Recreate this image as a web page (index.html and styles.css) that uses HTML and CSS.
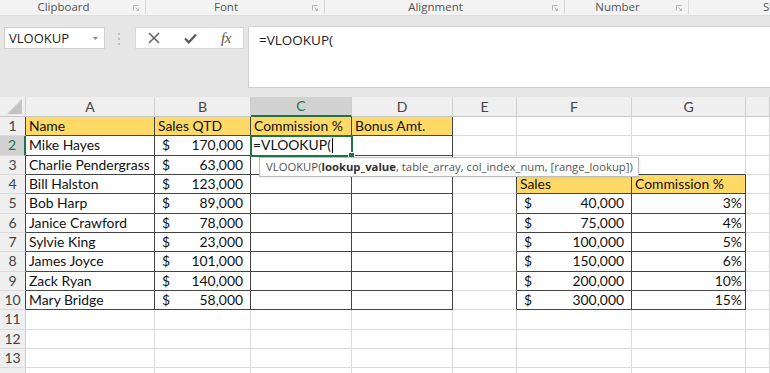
FILE: index.html
```html
<!DOCTYPE html>
<html>
<head>
<meta charset="utf-8">
<link rel="stylesheet" href="styles.css">
</head>
<body>
<div class="ribbon">
  <div class="group g-clip"><span class="glabel">Clipboard</span><svg class="launch" width="6" height="6" viewBox="0 0 6 6"><path d="M0.5 5.5V0.5H5.5" fill="none" stroke="#b5b5b5"/><path d="M2.5 2.5L5.5 5.5M3.5 5.5H5.5V3.5" fill="none" stroke="#b5b5b5"/></svg></div>
  <div class="group g-font"><span class="glabel">Font</span><svg class="launch" width="6" height="6" viewBox="0 0 6 6"><path d="M0.5 5.5V0.5H5.5" fill="none" stroke="#b5b5b5"/><path d="M2.5 2.5L5.5 5.5M3.5 5.5H5.5V3.5" fill="none" stroke="#b5b5b5"/></svg></div>
  <div class="group g-align"><span class="glabel">Alignment</span><svg class="launch" width="6" height="6" viewBox="0 0 6 6"><path d="M0.5 5.5V0.5H5.5" fill="none" stroke="#b5b5b5"/><path d="M2.5 2.5L5.5 5.5M3.5 5.5H5.5V3.5" fill="none" stroke="#b5b5b5"/></svg></div>
  <div class="group g-num"><span class="glabel">Number</span><svg class="launch" width="6" height="6" viewBox="0 0 6 6"><path d="M0.5 5.5V0.5H5.5" fill="none" stroke="#b5b5b5"/><path d="M2.5 2.5L5.5 5.5M3.5 5.5H5.5V3.5" fill="none" stroke="#b5b5b5"/></svg></div>
  <div class="group g-styles"><span class="glabel">Styles</span></div>
</div>

<div class="fbar">
  <div class="namebox"><span>VLOOKUP</span><svg class="dd" width="5" height="3" viewBox="0 0 5 3"><path d="M0 0H5L2.5 3Z" fill="#8a8a8a"/></svg></div>
  <div class="dots"><i></i><i></i><i></i></div>
  <div class="btns">
    <svg class="btn-x" width="12" height="12" viewBox="0 0 12 12"><path d="M1 1L11 11M11 1L1 11" stroke="#606060" stroke-width="1.5" fill="none"/></svg>
    <svg class="btn-ok" width="13" height="11" viewBox="0 0 13 11"><path d="M1 5.5L4.8 9.3L12 1.5" stroke="#5a5a5a" stroke-width="2.2" fill="none"/></svg>
    <span class="btn-fx">fx</span>
  </div>
  <div class="formula">=VLOOKUP(</div>
</div>

<div class="sheet">
  <div class="r hdr"><span class="corner"><svg width="15" height="15" viewBox="0 0 15 15"><path d="M15 0V15H0Z" fill="#c4c4c4"/></svg></span><span>A</span><span>B</span><span class="selcol">C</span><span>D</span><span>E</span><span>F</span><span>G</span><span></span></div>

  <div class="r"><span class="rh tb">1</span><span class="c t gold">Name</span><span class="c t gold">Sales QTD</span><span class="c t gold">Commission %</span><span class="c t gold">Bonus Amt.</span><span class="c"></span><span class="c"></span><span class="c"></span><span class="c"></span></div>

  <div class="r"><span class="rh tb selrow">2</span><span class="c t">Mike Hayes</span><span class="c t n"><b>$</b><em>170,000</em></span><span class="c t active">=VLOOKUP(<i class="caret"></i></span><span class="c t"></span><span class="c"></span><span class="c"></span><span class="c"></span><span class="c"></span></div>

  <div class="r"><span class="rh tb">3</span><span class="c t">Charlie Pendergrass</span><span class="c t n"><b>$</b><em>63,000</em></span><span class="c t"></span><span class="c t"></span><span class="c"></span><span class="c ab"></span><span class="c ab"></span><span class="c"></span></div>

  <div class="r"><span class="rh tb">4</span><span class="c t">Bill Halston</span><span class="c t n"><b>$</b><em>123,000</em></span><span class="c t"></span><span class="c t"></span><span class="c lf"></span><span class="c t gold">Sales</span><span class="c t gold">Commission %</span><span class="c"></span></div>

  <div class="r"><span class="rh tb">5</span><span class="c t">Bob Harp</span><span class="c t n"><b>$</b><em>89,000</em></span><span class="c t"></span><span class="c t"></span><span class="c lf"></span><span class="c t n"><b>$</b><em>40,000</em></span><span class="c t p">3%</span><span class="c"></span></div>

  <div class="r"><span class="rh tb">6</span><span class="c t">Janice Crawford</span><span class="c t n"><b>$</b><em>78,000</em></span><span class="c t"></span><span class="c t"></span><span class="c lf"></span><span class="c t n"><b>$</b><em>75,000</em></span><span class="c t p">4%</span><span class="c"></span></div>

  <div class="r"><span class="rh tb">7</span><span class="c t">Sylvie King</span><span class="c t n"><b>$</b><em>23,000</em></span><span class="c t"></span><span class="c t"></span><span class="c lf"></span><span class="c t n"><b>$</b><em>100,000</em></span><span class="c t p">5%</span><span class="c"></span></div>

  <div class="r"><span class="rh tb">8</span><span class="c t">James Joyce</span><span class="c t n"><b>$</b><em>101,000</em></span><span class="c t"></span><span class="c t"></span><span class="c lf"></span><span class="c t n"><b>$</b><em>150,000</em></span><span class="c t p">6%</span><span class="c"></span></div>

  <div class="r"><span class="rh tb">9</span><span class="c t">Zack Ryan</span><span class="c t n"><b>$</b><em>140,000</em></span><span class="c t"></span><span class="c t"></span><span class="c lf"></span><span class="c t n"><b>$</b><em>200,000</em></span><span class="c t p">10%</span><span class="c"></span></div>

  <div class="r"><span class="rh tb">10</span><span class="c t">Mary Bridge</span><span class="c t n"><b>$</b><em>58,000</em></span><span class="c t"></span><span class="c t"></span><span class="c lf"></span><span class="c t n"><b>$</b><em>300,000</em></span><span class="c t p">15%</span><span class="c"></span></div>

  <div class="r"><span class="rh">11</span><span class="c"></span><span class="c"></span><span class="c"></span><span class="c"></span><span class="c"></span><span class="c"></span><span class="c"></span><span class="c"></span></div>

  <div class="r"><span class="rh">12</span><span class="c"></span><span class="c"></span><span class="c"></span><span class="c"></span><span class="c"></span><span class="c"></span><span class="c"></span><span class="c"></span></div>

  <div class="r"><span class="rh">13</span><span class="c"></span><span class="c"></span><span class="c"></span><span class="c"></span><span class="c"></span><span class="c"></span><span class="c"></span><span class="c"></span></div>

  <div class="r"><span class="rh"></span><span class="c"></span><span class="c"></span><span class="c"></span><span class="c"></span><span class="c"></span><span class="c"></span><span class="c"></span><span class="c"></span></div>

  <div class="tip">VLOOKUP(<b>lookup_value</b>, table_array, col_index_num, [range_lookup])</div>
</div>
</body>
</html>
```

FILE: styles.css
```css
* { box-sizing: border-box; }
html, body { margin: 0; padding: 0; }
body {
  width: 770px;
  height: 373px;
  overflow: hidden;
  background: #e6e6e6;
  font-family: "Open Sans", "Noto Sans", sans-serif;
  color: #222;
}

/* ribbon group labels */
.ribbon {
  display: flex;
  height: 16px;
  background: #f3f3f3;
  border-bottom: 1px solid #dedede;
  font-size: 11.5px;
  color: #555;
  overflow: hidden;
}
.group {
  position: relative;
  flex-shrink: 0;
  display: flex;
  align-items: center;
  justify-content: center;
  padding-right: 18px;
  border-right: 1px solid #d8d8d8;
  height: 14px;
  line-height: 14px;
}
.g-clip { width: 146px; }
.g-font { width: 179px; }
.g-align { width: 240px; }
.g-num { width: 124px; }
.g-styles { width: 200px; border-right: none; justify-content: flex-start; padding-left: 74px; }
.launch { position: absolute; right: 6px; top: 5px; }

/* formula bar */
.fbar {
  display: flex;
  align-items: flex-start;
  height: 81px;
  padding: 10px 0 0 4px;
}
.namebox {
  width: 101px;
  height: 22px;
  margin-top: 1px;
  background: #fff;
  border: 1px solid #cfcfcf;
  display: flex;
  align-items: center;
  justify-content: space-between;
  padding: 0 6px 0 4px;
  font-size: 13px;
  color: #222;
}
.dots {
  width: 3px;
  margin: 7px 0 0 13px;
  display: flex;
  flex-direction: column;
  gap: 3px;
}
.dots i { display: block; width: 2px; height: 2px; background: #bdbdbd; }
.btns {
  width: 109px;
  height: 22px;
  margin: 1px 0 0 14px;
  background: #fff;
  border: 1px solid #d6d6d6;
  display: flex;
  align-items: center;
  padding-left: 12px;
}
.btn-x { margin-right: 24px; }
.btn-ok { margin-right: 24px; }
.btn-fx {
  font-family: "Liberation Serif", serif;
  font-style: italic;
  font-size: 15px;
  color: #555;
  letter-spacing: -0.5px;
}
.formula {
  flex: 1;
  margin-left: 4px;
  height: 62px;
  background: #fff;
  border: 1px solid #cfcfcf;
  border-right: none;
  padding: 4px 0 0 10px;
  font-size: 13.5px;
  color: #222;
}

/* sheet */
.sheet {
  position: relative;
  background: #fff;
  font-family: "Lato", "Open Sans", sans-serif;
  font-size: 13.9px;
  color: #111;
}
.r {
  display: grid;
  grid-template-columns: 26px 129px 96px 101px 101px 64px 115px 114px 1fr;
  height: 19.33px;
}
.r > span {
  border-right: 1px solid #dadada;
  border-bottom: 1px solid #dadada;
  white-space: nowrap;
  overflow: hidden;
  line-height: 18.33px;
  padding: 0 3px;
}
.hdr { height: 20px; background: #e6e6e6; }
.hdr > span {
  background: #efefef;
  border-right-color: #cfcfcf;
  border-bottom-color: #c6c6c6;
  text-align: center;
  color: #444;
  line-height: 19px;
  font-size: 14px;
}
.hdr > .corner { position: relative; padding: 0; }
.corner svg { position: absolute; right: 3px; bottom: 2px; }
.hdr > .selcol {
  background: #d2d2d2;
  color: #217346;
  border-bottom: 2px solid #217346;
  line-height: 18px;
}
.rh {
  background: #efefef;
  text-align: center;
  color: #444;
  font-size: 14px;
  padding: 0 !important;
  border-right-color: #cfcfcf !important;
}
.rh.tb { border-right-color: #444 !important; }
.rh.selrow {
  background: #d2d2d2;
  color: #217346;
  border-right: 2px solid #217346 !important;
}
.r > .t { border-right-color: #444; border-bottom-color: #444; }
.r > .lf { border-right-color: #444; }
.r > .ab { border-bottom-color: #444; }
.gold { background: #ffd966; }
.n {
  display: flex;
  justify-content: space-between;
  padding: 0 7px !important;
}
.n b { font-weight: normal; }
.n em { font-style: normal; }
.p { text-align: right; padding-right: 3px !important; }
.active {
  position: relative;
  outline: 2px solid #217346;
  outline-offset: -1px;
  padding-left: 2px !important;
  overflow: visible !important;
}
.active::after {
  content: "";
  position: absolute;
  right: -4px;
  bottom: -4px;
  width: 5px;
  height: 5px;
  background: #217346;
  border: 1px solid #fff;
}
.caret {
  display: inline-block;
  width: 1px;
  height: 15px;
  background: #000;
  vertical-align: -3px;
  margin-left: 1px;
}
.tip {
  position: absolute;
  left: 259px;
  top: 60px;
  height: 20px;
  width: 380px;
  background: #fff;
  border: 1px solid #bdbdbd;
  font-family: "Open Sans", sans-serif;
  font-size: 11.3px;
  line-height: 18px;
  color: #555;
  padding-left: 6px;
  white-space: nowrap;
  box-shadow: 1px 1px 2px rgba(0,0,0,0.08);
}
.tip b { color: #333; }
```
